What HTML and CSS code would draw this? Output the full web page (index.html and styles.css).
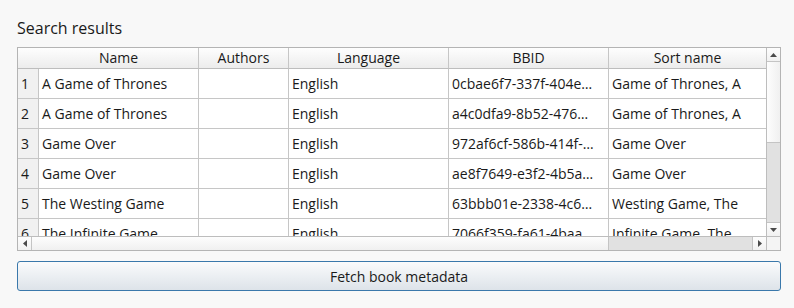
FILE: index.html
```html
<!DOCTYPE html>
<html lang="en">
<head>
  <meta charset="UTF-8" />
  <title>Search results</title>
  <link rel="stylesheet" href="styles.css">
</head>
<body>
  <div class="page">
    <div class="title">Search results</div>

    <div class="frame">
      <div class="viewport">
        <div class="row head">
          <div class="cell corner"></div>
          <div class="cell">Name</div>
          <div class="cell">Authors</div>
          <div class="cell">Language</div>
          <div class="cell">BBID</div>
          <div class="cell last">Sort name</div>
        </div>
        <div class="row">
          <div class="cell num">1</div>
          <div class="cell">A Game of Thrones</div>
          <div class="cell"></div>
          <div class="cell">English</div>
          <div class="cell">0cbae6f7-337f-404e…</div>
          <div class="cell last">Game of Thrones, A</div>
        </div>
        <div class="row">
          <div class="cell num">2</div>
          <div class="cell">A Game of Thrones</div>
          <div class="cell"></div>
          <div class="cell">English</div>
          <div class="cell">a4c0dfa9-8b52-476…</div>
          <div class="cell last">Game of Thrones, A</div>
        </div>
        <div class="row">
          <div class="cell num">3</div>
          <div class="cell">Game Over</div>
          <div class="cell"></div>
          <div class="cell">English</div>
          <div class="cell">972af6cf-586b-414f-…</div>
          <div class="cell last">Game Over</div>
        </div>
        <div class="row">
          <div class="cell num">4</div>
          <div class="cell">Game Over</div>
          <div class="cell"></div>
          <div class="cell">English</div>
          <div class="cell">ae8f7649-e3f2-4b5a…</div>
          <div class="cell last">Game Over</div>
        </div>
        <div class="row">
          <div class="cell num">5</div>
          <div class="cell">The Westing Game</div>
          <div class="cell"></div>
          <div class="cell">English</div>
          <div class="cell">63bbb01e-2338-4c6…</div>
          <div class="cell last">Westing Game, The</div>
        </div>
        <div class="row">
          <div class="cell num">6</div>
          <div class="cell">The Infinite Game</div>
          <div class="cell"></div>
          <div class="cell">English</div>
          <div class="cell">7066f359-fa61-4baa…</div>
          <div class="cell last">Infinite Game, The</div>
        </div>
      </div>

      <div class="vscroll">
        <div class="arrow up">
          <svg width="7" height="4" viewBox="0 0 7 4"><polygon points="3.5,0 7,4 0,4" fill="#4a4a4a"/></svg>
        </div>
        <div class="vhandle"></div>
        <div class="vtrack"></div>
        <div class="arrow down">
          <svg width="7" height="4" viewBox="0 0 7 4"><polygon points="0,0 7,0 3.5,4" fill="#4a4a4a"/></svg>
        </div>
      </div>

      <div class="hscroll">
        <div class="arrow left">
          <svg width="4" height="7" viewBox="0 0 4 7"><polygon points="4,0 4,7 0,3.5" fill="#4a4a4a"/></svg>
        </div>
        <div class="hhandle"></div>
        <div class="htrack"></div>
        <div class="arrow right">
          <svg width="4" height="7" viewBox="0 0 4 7"><polygon points="0,0 4,3.5 0,7" fill="#4a4a4a"/></svg>
        </div>
      </div>

      <div class="sizegrip"></div>
    </div>

    <button class="fetch">Fetch book metadata</button>
  </div>
</body>
</html>
```

FILE: styles.css
```css
* {
  box-sizing: border-box;
}

body {
  margin: 0;
  background: #f8f8f8;
  font-family: 'Open Sans', sans-serif;
  font-size: 14px;
  color: #1a1a1a;
}

.page {
  padding: 18px 13px 0 17px;
}

.title {
  font-size: 16px;
  line-height: 20px;
  margin-bottom: 9px;
}

.frame {
  width: 764px;
  height: 204px;
  border: 1px solid #b4b4b4;
  display: grid;
  grid-template-columns: 748px 14px;
  grid-template-rows: 188px 14px;
  background: #fff;
}

.viewport {
  overflow: hidden;
}

.row {
  display: grid;
  grid-template-columns: 21px 160px 90px 160px 160px 157px;
  height: 30px;
}

.cell {
  border-right: 1px solid #c6c6c6;
  border-bottom: 1px solid #c6c6c6;
  padding: 0 3px;
  line-height: 29px;
  white-space: nowrap;
  overflow: hidden;
}

.cell.last {
  border-right: none;
}

.num {
  background: #f1f1f1;
  padding-left: 3px;
}

.head {
  height: 21px;
}

.head .cell {
  background: linear-gradient(#fefefe, #ececec);
  text-align: center;
  line-height: 20px;
  border-bottom-color: #bdbdbd;
}

.head .corner {
  border-right: none;
}

.vscroll {
  border-left: 1px solid #bdbdbd;
  display: flex;
  flex-direction: column;
}

.hscroll {
  border-top: 1px solid #bdbdbd;
  display: flex;
}

.arrow {
  display: flex;
  align-items: center;
  justify-content: center;
  background: linear-gradient(#fdfdfd, #f1f1f1);
}

.arrow svg {
  display: block;
}

.vscroll .arrow {
  height: 14px;
}

.arrow.up {
  border-bottom: 1px solid #c4c4c4;
}

.arrow.down {
  border-top: 1px solid #c4c4c4;
}

.vhandle {
  height: 81px;
  border-bottom: 1px solid #c4c4c4;
  background: linear-gradient(to right, #fdfdfd, #f0f0f0);
}

.vtrack {
  flex: 1;
  background: #e1e1e1;
}

.hscroll .arrow {
  width: 14px;
}

.arrow.left {
  border-right: 1px solid #c4c4c4;
}

.arrow.right {
  border-left: 1px solid #c4c4c4;
}

.hhandle {
  width: 577px;
  border-right: 1px solid #c4c4c4;
  background: linear-gradient(#fdfdfd, #f0f0f0);
}

.htrack {
  flex: 1;
  background: #e1e1e1;
}

.sizegrip {
  border-left: 1px solid #bdbdbd;
  border-top: 1px solid #bdbdbd;
  background: #f4f4f4;
}

.fetch {
  display: block;
  width: 764px;
  height: 30px;
  margin-top: 10px;
  border: 1px solid #3a78ab;
  border-radius: 3px;
  background: linear-gradient(#fafbfc, #dde3e9);
  font-family: 'Open Sans', sans-serif;
  font-size: 14px;
  color: #1a1a1a;
  padding: 0;
}
```
